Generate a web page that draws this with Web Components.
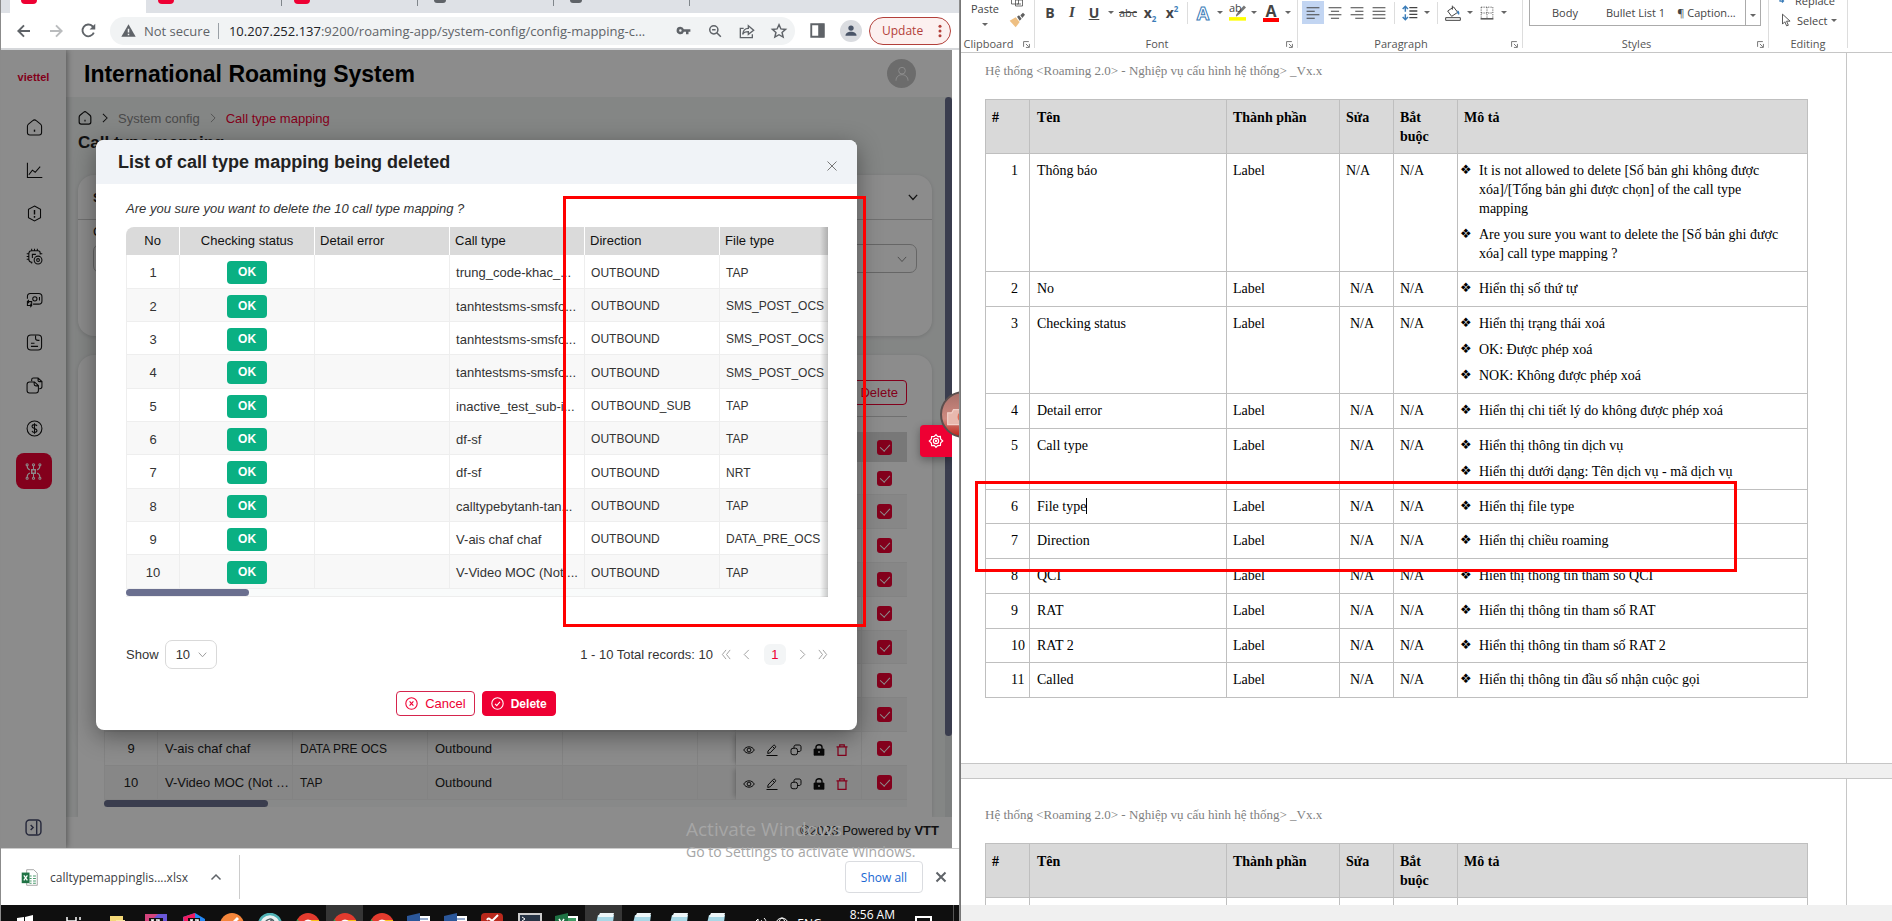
<!DOCTYPE html>
<html lang="en">
<head>
<meta charset="utf-8">
<title>International Roaming System</title>
<style>
html,body{margin:0;height:100%;overflow:hidden;background:#fff}
body{font-family:"Liberation Sans",Arial,sans-serif;font-size:13px}
</style>
</head>
<body>
<split-desk></split-desk>
<script>
const define = (name, css, html) => customElements.define(name, class extends HTMLElement {
  constructor() {
    super();
    const t = document.createElement('template');
    t.innerHTML = `<style>*{box-sizing:border-box}${css}</style>` + (typeof html === 'function' ? html(this) : html);
    this.attachShadow({ mode: 'open' }).append(t.content.cloneNode(true));
  }
});

/* ---------- icons ---------- */
const ICONS = {
  back: '<path d="M20 12H5M12 4.500l-7.500 7.500 7.500 7.500" stroke-width="2.600"/>',
  forward: '<path d="M4 12h15M12 4.500l7.500 7.500-7.500 7.500" stroke-width="2.600"/>',
  reload: '<path d="M19.500 15A8.300 8.300 0 1 1 17.700 6l2 2" stroke-width="2.600"/><path d="M21.500 2.500v8h-8z" fill="currentColor" stroke="none"/>',
  warn: '<path d="M12 2 23.500 22H.5z" fill="currentColor" stroke="none"/><path d="M12 9v6M12 17v2.500" stroke="#f1f3f4" stroke-width="2.400"/>',
  key: '<g fill="currentColor" stroke="none"><path fill-rule="evenodd" d="M7 6a6 6 0 1 0 5.600 8H16v4h4v-4h3v-4H12.600A6 6 0 0 0 7 6zm0 4a2 2 0 1 1 0 4 2 2 0 0 1 0-4z"/></g>',
  zoom: '<circle cx="10" cy="10" r="7"/><path d="m15 15 7 7M7 10h6" />',
  share: '<path d="M7 8H2v14h18v-5M14 4l8 7-8 6v-4c-4 0-7 1-8.500 4C6 12 9 8 14 8z"/>',
  star: '<path d="m12 2.500 2.900 6.400 7 .7-5.300 4.700 1.600 6.900L12 17.600l-6.200 3.600 1.600-6.900L2.100 9.600l7-.7z"/>',
  panel: '<path d="M2 2h20v20H2z" stroke-width="3"/><path d="M14 2h8v20h-8z" fill="currentColor"/>',
  person: '<g fill="currentColor" stroke="none"><circle cx="12" cy="7" r="4.600"/><path d="M2.500 20c0-9 19-9 19 0z"/></g>',
  dots: '<g fill="currentColor" stroke="none"><circle cx="12" cy="4" r="2.600"/><circle cx="12" cy="12" r="2.600"/><circle cx="12" cy="20" r="2.600"/></g>',
  home: '<path d="M2 10.500c0-1.500.5-2.500 1.500-3.300l6-4.900c1.500-1.300 3.500-1.300 5 0l6 4.900c1 .8 1.500 1.800 1.500 3.300V19c0 2-1 3.500-3.500 3.500h-13C3 22.500 2 21 2 19z"/><path d="M12 15v3" stroke-width="2"/>',
  chart: '<path d="M2 1v21h21M4 18l5-6.500 4 3 7-8"/>',
  hexa: '<path d="M12 1.500 20.500 6v12L12 22.500 3.500 18V6z"/><path d="M12 7v6.500M12 15.500V18" stroke-width="2"/>',
  chip: '<path d="M20 9V7c0-1.500-1-3-3-3H8C5.500 4 4 5.500 4 8v8c0 2.500 1.500 4 4 4h1M8 1v3M12 1v3M16 1v3M1 8h3M1 12h3M1 16h3M20 8h3M8 20v2M9 14V9h5"/><circle cx="17" cy="17" r="5.500"/><circle cx="17" cy="17" r="2"/>',
  money: '<path d="M2 11V8c0-3 1-4.500 4-4.500h12c3 0 4.500 1.500 4.500 4.500v6c0 3-1.500 4.500-4.500 4.500h-8"/><circle cx="12.500" cy="11" r="3"/><path d="M19 8.500v5M2 15h6v5.500H2zM4 12.500 2 15l2 2M6 18l2 2.500L6 23"/>',
  doc: '<rect x="2" y="1.500" width="20" height="21" rx="5"/><path d="M13.500 2v4c0 2 1.500 3 3.500 3h2M7 13h5M7 17.500h10"/>',
  docs: '<path d="M8 6V4c0-1.500 1-2.500 2.500-2.500H17l5.500 5v7c0 2-1 3-3 3h-1M17 2v3c0 1 .8 1.500 2 1.500h3"/><path d="M5 7h7l5.500 5v7c0 2-1.500 3.500-3.500 3.500H5c-2 0-3.500-1.500-3.500-3.500v-8.500C1.500 8.500 3 7 5 7zM11.500 7.500V10c0 2 1 2.500 2.500 2.500h3"/>',
  dollar: '<circle cx="12" cy="12" r="10.500"/><path d="M15.500 8.500C15 7 13.500 6.500 12 6.500c-2 0-3.500 1-3.500 2.700 0 3.600 7 2 7 5.600 0 1.700-1.500 2.700-3.500 2.700-1.700 0-3-.7-3.500-2.200M12 4.500v15"/>',
  nodes: '<rect x="9.500" y="9.500" width="5" height="5" stroke-width="2"/><circle cx="3" cy="2.500" r="1.500"/><circle cx="12" cy="2.500" r="1.500"/><circle cx="21" cy="2.500" r="1.500"/><circle cx="3" cy="21.500" r="1.500"/><circle cx="12" cy="21.500" r="1.500"/><circle cx="21" cy="21.500" r="1.500"/><path d="M12 4v4.500M12 15.500V20M3 4c0 3.500 1 5 4 6M21 4c0 3.500-1 5-4 6M3 20c0-3.500 1-5 4-6M21 20c0-3.500-1-5-4-6"/>',
  collapse: '<rect x="1.500" y="1.500" width="21" height="21" rx="5"/><path d="M16.500 2v20M8 8.500l3.500 3.500L8 15.500"/>',
  user: '<circle cx="12" cy="7" r="5"/><path d="M3 22c0-12 18-12 18 0"/>',
  right: '<path d="m7 2 10 10L7 22"/>', left: '<path d="M17 2 7 12l10 10"/>',
  down: '<path d="m2 7 10 11L22 7"/>', up: '<path d="m3 17 9-9 9 9" stroke-width="3"/>',
  first: '<path d="M11 2 3 12l8 10M20 2l-8 10 8 10"/>', last: '<path d="m4 2 8 10-8 10M13 2l8 10-8 10"/>',
  close: '<path d="m3 3 18 18M21 3 3 21"/>',
  cancel: '<circle cx="12" cy="12" r="10.500"/><path d="m8.500 8 7 8M15.500 8l-7 8"/>',
  okay: '<circle cx="12" cy="12" r="10.500"/><path d="m7.500 12.500 3.200 3.500L16.500 9"/>',
  eye: '<path d="M1.500 12C6 3.500 18 3.500 22.500 12 18 20.500 6 20.500 1.500 12z"/><circle cx="12" cy="12" r="3.800"/>',
  pencil: '<path d="M4 14 15 2.500c1.500-1.500 5.500 2 4 4L8.500 17.500 3.500 19zM13 5l4 4M1 23h22"/>',
  copy: '<rect x="2" y="8.500" width="13" height="13" rx="4"/><path d="M8 8V6c0-2.500 1-4 4-4h6c3 0 4 1.500 4 4v5c0 3-1.500 4-4 4h-3"/>',
  lock: '<path d="M2 10h20v12.500H2z" fill="currentColor"/><path d="M6 10V6c0-6 12-6 12 0v4" stroke-width="2.800"/><path d="M12 14v4" stroke="#fff" stroke-width="2.500"/>',
  trash: '<path d="M1 5.500h22M4 5.500v17h16v-17M7.500 5V1.500h9V5"/>',
  gear: '<path d="m12 1 3 3.500 4.500-.5.500 4.500L23.500 12 20 15l-.5 4.500-4.500.5-3 3-3-3.500-4.500.5-.5-4.500L.5 12 4 9l.5-4.500L9 4z"/><circle cx="12" cy="12" r="4.500"/><circle cx="12" cy="12" r="1"/>',
  excel: '<path d="M8 1h10l5 5v17H8z" fill="#fff" stroke="#999" stroke-width="1.200"/><path d="M12 10h3M17 10h4M12 13.500h3M17 13.500h4M12 17h3M17 17h4M12 20h3M17 20h4" stroke="#4a9a6d"/><path d="M1 5h11v15H1z" fill="#1f7244" stroke="none"/><path d="m4 9 5 7M9 9l-5 7" stroke="#fff" stroke-width="1.800"/>',
  brush: '<path d="m1 13 9-5 6 7-6 8z" fill="#eebf82" stroke="none"/><path d="m12 7 3-2 4 5-3 3zM17 5l4-4 3 3-4 5z" fill="#5f5f5f" stroke="none"/>',
  launch: '<path d="M2 20V2h18M10 22h12V10M10 10l10 10" stroke-width="3"/>',
  lines: '<path d="M1 3h22M1 9h14M1 15h22M1 21h14" stroke-width="2"/>',
  linec: '<path d="M1 3h22M5 9h14M1 15h22M5 21h14" stroke-width="2"/>',
  liner: '<path d="M1 3h22M9 9h14M1 15h22M9 21h14" stroke-width="2"/>',
  linej: '<path d="M1 3h22M1 9h22M1 15h22M1 21h22" stroke-width="2"/>',
  spacing: '<path d="M11 4h12M11 9h12M11 14h12M11 19h12" stroke-width="2"/><path d="M5 2v8M5 14v8M1 6l4-4 4 4M1 18l4 4 4-4" stroke="#3a7cb8" stroke-width="2.200"/>',
  bucket: '<path d="m4 9 9-6 6 8-9 6zM11 1v6"/><path d="M19 8c3 2 3 5 2 7l-3-3z" fill="#3a7cb8" stroke="none"/><path d="M1 19h22v4H1z" fill="#fff"/>',
  borders: '<path d="M2 2h20v20M2 2v20M12 2v20M2 12h20" stroke-dasharray="2 2"/><path d="M1 22h22" stroke-width="2.400"/>',
  marker: '<path d="m10 15 3-4 8-9 3 3-9 9-5 4z" fill="#777" stroke="none"/><path d="M0 18.500h24v5H0z" fill="#ff0" stroke="none"/>',
  cursor: '<path d="M6 2v17l4-4 3 7 3-1-3-7h6z" fill="#fff"/>',
  paste: '<path d="M1-8h14V8H1zM9 0h14v12H9z" fill="#fff"/><path d="M12 8h8"/>',
  replace: '<path d="M2 2v6h6M6 5l3 3-3 3" stroke="#3a7cb8" stroke-width="2.500"/>',
  camera: '<path d="M2 7h5l2-4h10v18H2z" fill="#e8b8ae" stroke="#f2cfc8"/><path d="M19 7c-5 0-6 9 0 10" stroke="#e06a55" stroke-width="2"/>'
};
define('ui-icon', ':host{display:inline-flex;flex:none}svg{display:block;overflow:visible;fill:none;stroke:currentColor}', el => {
  const s = el.getAttribute('size') || 16;
  return `<svg width="${s}" height="${s}" viewBox="0 0 24 24" stroke-width="${el.getAttribute('weight') || 1.5}" aria-hidden="true">${ICONS[el.getAttribute('name')]}</svg>`;
});

/* ---------- browser chrome ---------- */
define('tab-strip', `
:host{display:flex;height:13px;background:#dee1e6;overflow:hidden}
.tab{width:136px;display:flex;align-items:flex-start;padding:0 11px;position:relative;border-right:1px solid #dee1e6}
.tab.active{background:#fff;width:137px;margin-left:9px;padding-left:11px}
.tab:not(.active)::after{content:"";position:absolute;right:0;top:0;width:1px;height:6px;background:#80868b}
i{width:16px;height:4px;background:#ee0033;border-radius:0 0 4px 4px}
.tab.dark i{background:#5f6368;width:12px;height:3px;border-radius:0 0 8px 8px;margin-left:4px}`,
`<div class="tab active"><i></i></div><div class="tab"><i></i></div><div class="tab"><i></i></div><div class="tab dark"><i></i></div><div class="tab dark"><i></i></div>`);

define('address-bar', `
:host{display:flex;align-items:center;height:37px;padding:0 8px 0 13px;background:#fff;border-bottom:2px solid #d5d7da;color:#5f6368;font-family:"Open Sans","Noto Sans",sans-serif}
button{border:0;background:none;padding:0;color:inherit;font:inherit;display:flex;align-items:center;justify-content:center;width:32px;height:28px}
button.nav{width:20px;margin-right:12px}
.dim{color:#babcbe}
.box{flex:1;display:flex;align-items:center;height:28px;border-radius:14px;background:#f1f3f4;padding-left:11px;min-width:0}
.ns{font-size:13px;margin:0 8px 0 8px;white-space:nowrap}
.url{flex:1;min-width:0;color:#5f6368;font-size:13px;white-space:nowrap;border-left:1px solid #9aa0a6;height:16px;line-height:16px;padding-left:10px}
.url b{font-weight:400;color:#202124}
.av{width:22px;height:22px;border-radius:50%;background:#dadce0;color:#4a5568;margin:0 7px}
.upd{width:82px;border:1px solid #b3403a;border-radius:14px;background:#fcf0ef;color:#b3403a;font-size:12px;justify-content:flex-start;padding-left:12px;gap:10px}`,
`<button class="nav" aria-label="Back"><ui-icon name="back" size="18"></ui-icon></button><button class="nav dim" aria-label="Forward"><ui-icon name="forward" size="18"></ui-icon></button><button class="nav" aria-label="Reload"><ui-icon name="reload" size="17"></ui-icon></button>
<div class="box"><ui-icon name="warn" size="15"></ui-icon><span class="ns">Not secure</span><div class="url"><b>10.207.252.137</b>:9200/roaming-app/system-config/config-mapping-c...</div>
<button aria-label="Passwords"><ui-icon name="key" size="15"></ui-icon></button><button aria-label="Zoom"><ui-icon name="zoom" size="14" weight="2.600"></ui-icon></button><button aria-label="Share"><ui-icon name="share" size="16" weight="2"></ui-icon></button><button aria-label="Bookmark"><ui-icon name="star" size="16" weight="2.200"></ui-icon></button></div>
<button aria-label="Side panel" style="margin-left:6px"><ui-icon name="panel" size="15"></ui-icon></button><button class="av" aria-label="Profile"><ui-icon name="person" size="14"></ui-icon></button><button class="upd">Update<ui-icon name="dots" size="14"></ui-icon></button>`);

define('download-bar', `
:host{display:flex;align-items:center;height:57px;flex:none;background:#fff;border-top:1px solid #ccc;color:#3c4043;font-family:"Open Sans","Noto Sans",sans-serif;font-size:12px;padding:0 12px 0 20px}
.name{color:#3c4043;text-decoration:none;margin:0 20px 0 12px;width:140px}
button{border:0;background:none;padding:0;color:#5f6368;display:flex}
.item{display:flex;align-items:center;border-right:1px solid #ccc;height:44px;padding-right:17px}
.all{margin-left:auto;width:78px;height:32px;border:1px solid #dadce0;border-radius:4px;color:#1967d2;font:inherit;align-items:center;justify-content:center;margin-right:12px}`,
`<div class="item"><ui-icon name="excel" size="17"></ui-icon><a class="name" href="#">calltypemappinglis....xlsx</a><button aria-label="Options"><ui-icon name="up" size="12"></ui-icon></button></div><button class="all">Show all</button><button aria-label="Close"><ui-icon name="close" size="12" weight="4"></ui-icon></button>`);

const chrome = '<circle cx="12" cy="12" r="12" fill="#e33b2e"/><path d="M12 12h12a12 12 0 0 1-12 12z" fill="#fbc116"/><path d="M1.500 6 12 24A12 12 0 0 1 1.500 6z" fill="#2da94f"/><path d="M12 7h11v4H12z" fill="#fbc116"/><circle cx="12" cy="12" r="5.500" fill="#fff"/>';
const word = '<path d="M11 3h12v20H11z" fill="#fff"/><path d="M13 6h8M13 9h8" stroke="#2b579a"/><path d="M0 3 13 0v24L0 21z" fill="#2b579a"/>';
const note = '<path d="M6 2h16l-3 21H1z" fill="#a9d8e6"/><path d="M8 0h14l-1 4H6z" fill="#eef6f8"/>';
const TASKS = [
  [48, '<path d="m4 5 7-1v8H4zM12 4l8-2v10h-8z" fill="#fff"/>'],
  [48, '<path d="M6 4v4h9V4M19 4v3" fill="none" stroke="#fff" stroke-width="1.500"/>'],
  [40, '<path d="M5 3h13v20H5z" fill="#f5d978"/><path d="M11 7h9v14h-9z" fill="#fbe9a5"/>'],
  [38, '<path d="M1 1h22v22H1z" fill="#6a57d8"/><path d="M1 1h13L1 14z" fill="#d4447d"/><path d="M5 5h14v17H5z" fill="#111"/><path d="M7 7h3M8.500 7v8M12 7h3v8" fill="none" stroke="#fff" stroke-width="1.500"/>'],
  [38, '<path d="M1 4 13 0l10 6v17H1z" fill="#2488f5"/><path d="M1 4 13 0v8L4 20z" fill="#f21b60"/><path d="M6 5h12v18H6z" fill="#111"/><path d="M8 7h3M9.500 7v8M13 7h3v8" fill="none" stroke="#fff" stroke-width="1.500"/>'],
  [38, '<circle cx="12" cy="12" r="12" fill="#f5863b"/><path d="m9 12 8-8 2 2-7 7z" fill="#fff"/>'],
  [38, '<circle cx="12" cy="12" r="11" fill="#e9f1f1" stroke="#4fb2b5" stroke-width="2.500"/><path d="M7 12c0-7 9-8 9-2s-3 2-3-3" fill="none" stroke="#4b5b60" stroke-width="1.500"/>'],
  [37, chrome], [37, chrome, 1], [37, chrome], [37, word], [37, word],
  [37, '<rect x="0" y="0" width="22" height="22" rx="4" fill="#b9291c"/><path d="M6 7c2-4 4 2 6 0s3-3 5-5" fill="none" stroke="#fff" stroke-width="2"/>'],
  [37, '<path d="M1 1h22v22H1z" fill="#273445" stroke="#ccc" stroke-width="2"/><path d="m4 4 3 2-3 2" fill="none" stroke="#fff"/>'],
  [37, '<path d="M11 3h12v20H11z" fill="#fff"/><path d="M13 5h8v4h-8z" fill="#3d9b63"/><path d="M0 3 13 0v24L0 21z" fill="#1f7244"/><path d="m4 6 5 8M9 6l-5 8" stroke="#fff" stroke-width="1.500"/>'],
  [37, note, 1], [37, note], [37, note], [37, note]];
define('task-bar', `
:host{display:flex;height:16px;flex:none;background:#0f0f0f;color:#fff;overflow:hidden;font-family:"Open Sans","Noto Sans",sans-serif;font-size:12px}
.t{height:16px;display:flex;justify-content:center;padding-top:8px;overflow:hidden}.t.on{background:#363636}
svg{display:block;flex:none}
.tray{margin-left:auto;display:flex;align-items:flex-start;padding-right:5px}
.tray svg{margin:12px 4px 0}
.lang{line-height:16px;margin:11px 28px 0 4px;height:16px}
.clock{line-height:16px;margin-top:2px;margin-right:20px}
.tray .msg{margin:11px 0 0;padding-right:0}
.end{width:1px;height:16px;background:#555;margin-left:20px}`,
TASKS.map(([w, p, on]) => `<div class="t${on ? ' on' : ''}" style="width:${w}px"><svg width="24" height="24" viewBox="0 0 24 24">${p}</svg></div>`).join('') +
`<div class="tray"><svg width="14" height="14" viewBox="0 0 14 14" fill="none" stroke="#fff"><path d="M1 6 5 2v9M8 3c2 2 2 4 0 6M11 1c3 3 3 7 0 10"/></svg><svg width="14" height="14" viewBox="0 0 14 14" fill="none" stroke="#fff"><circle cx="7" cy="7" r="6"/><ellipse cx="7" cy="7" rx="3" ry="6"/><path d="M1 6h12"/></svg><span class="lang">ENG</span><time class="clock">8:56 AM</time><svg class="msg" width="18" height="16" viewBox="0 0 18 16" fill="none" stroke="#fff" stroke-width="2"><path d="M1 1h15v12H1z"/></svg><i class="end"></i></div>`);

/* ---------- roaming application ---------- */
define('app-sidebar', `
:host{display:flex;flex-direction:column;align-items:center;background:#fff;box-shadow:1px 0 6px #0006;z-index:1}
.logo{color:#ee0033;font-weight:bold;font-size:11px;line-height:12px;margin:21px 0 26px}
nav{display:flex;flex-direction:column;align-items:center;gap:7px}
a{display:flex;align-items:center;justify-content:center;width:36px;height:36px;border-radius:8px;color:#111;padding-left:2px}
a.on{background:#ee0033;color:#fff;padding:0}
button{border:0;background:none;padding:0;margin-top:auto;margin-bottom:12px;color:#44496b;display:flex}`,
`<div class="logo">viettel</div><nav>${['home', 'chart', 'hexa', 'chip', 'money', 'doc', 'docs', 'dollar'].map(n => `<a href="#" aria-label="${n}"><ui-icon name="${n}" size="17"></ui-icon></a>`).join('')}<a class="on" href="#" aria-label="config"><ui-icon name="nodes" size="17"></ui-icon></a></nav><button aria-label="Expand"><ui-icon name="collapse" size="17" weight="2"></ui-icon></button>`);

define('check-box', `
:host{display:flex;justify-content:center}
input{appearance:none;margin:0;width:15px;height:15px;border-radius:3px;background:#ee0033;position:relative}
input::before{content:"";position:absolute;left:5px;top:2px;width:5px;height:8px;border:solid #fff;border-width:0 1px 1px 0;transform:rotate(42deg)}`,
'<input type="checkbox" checked aria-label="Select row">');

const acts = '<div class="acts"><button aria-label="View"><ui-icon name="eye" size="12" weight="2"></ui-icon></button><button aria-label="Edit"><ui-icon name="pencil" size="12" weight="2"></ui-icon></button><button aria-label="Copy"><ui-icon name="copy" size="12" weight="2"></ui-icon></button><button aria-label="Lock"><ui-icon name="lock" size="12"></ui-icon></button><button class="red" aria-label="Remove"><ui-icon name="trash" size="12" weight="2.500"></ui-icon></button></div>';
const bgRow = (c, i) => `<tr><td class="n">${c[0] || ''}</td><td>${c[1] || ''}</td><td class="up">${c[2] || ''}</td><td>${c[3] || ''}</td><td></td><td></td><td class="fix">${c[0] ? acts : ''}</td><td class="chk"><check-box></check-box></td></tr>`;
define('mapping-table', `
:host{display:block}
table{width:100%;table-layout:fixed;border-collapse:separate;border-spacing:0;color:#222}
th{height:30px;background:#dadada;padding:0}
td{height:34px;padding:0 0 0 7px;border-right:1px solid #eee;border-bottom:1px solid #eee;white-space:nowrap}
tr:nth-child(5n+1) td{height:33px}
tr:nth-child(even) td{background:#f6f6f6}
td:first-child{border-left:1px solid #eee}
td.n{text-align:center;padding:0}.up{font-size:12px}td.chk{padding:0;border-right:0}
td.fix{padding:0 13px 0 7px;box-shadow:-5px 0 5px -3px #0003}
.acts{display:flex;justify-content:space-between;padding-top:2px}
button{border:0;background:none;padding:0;display:flex;color:#111}.red{color:#ee0033}
.bar{height:7px;background:#f7faf9}.bar i{display:block;width:164px;height:7px;border-radius:4px;background:#6a6f8f}`,
`<table><colgroup><col style="width:54px"><col style="width:135px"><col style="width:135px"><col style="width:135px"><col style="width:135px"><col><col style="width:126px"><col style="width:45px"></colgroup>
<thead><tr><th></th><th></th><th></th><th></th><th></th><th></th><th></th><th><check-box></check-box></th></tr></thead><tbody>${[[], [], [], [], [], [], [], [], [9, 'V-ais chaf chaf', 'DATA PRE OCS', 'Outbound'], [10, 'V-Video MOC (Not …', 'TAP', 'Outbound']].map(bgRow).join('')}</tbody></table><div class="bar"><i></i></div>`);

define('app-main', `
:host{display:flex;flex-direction:column;min-width:0;color:#222}
header{height:47px;background:#fff;display:flex;align-items:center;justify-content:space-between;padding:0 36px 0 18px;flex:none}
h1{font-size:23px;line-height:24px;margin:0;color:#000;white-space:nowrap}
.user{width:29px;height:29px;border-radius:50%;border:0;background:#c5c5c5;color:#fff;display:flex;align-items:center;justify-content:center;padding:0}
.body{flex:1;min-height:0;display:flex;background:#f1f4f3;overflow:hidden}
.col{flex:1;min-width:0;display:flex;flex-direction:column;padding:12px 13px 0 12px}
.crumb{display:flex;align-items:center;height:18px;gap:8px}.crumb a{color:#888;text-decoration:none;display:flex}.crumb .h{color:#111}.crumb .now{color:#ee0033}
h2{font-size:17px;line-height:20px;margin:6px 0 22px}
section{background:#fff;box-shadow:0 1px 4px #0002}
.search{height:161px;border-radius:16px;flex:none;margin-bottom:19px}
.search .top{height:45px;border-bottom:1px solid #ccc;display:flex;justify-content:space-between;align-items:center;padding:0 14px 0 15px;font-weight:bold}
.search label{display:block;padding:5px 15px;line-height:14px}
.sel{margin:0 15px;height:29px;border:1px solid #bbb;border-radius:7px;display:flex;align-items:center;justify-content:flex-end;padding-right:9px;color:#777}
.list{flex:1;border-radius:16px 16px 0 0;padding:25px 25px 0 26px}
.del{display:flex;align-items:center;justify-content:flex-end;width:80px;height:25px;margin:0 0 11px auto;border:1px solid #ee0033;border-radius:4px;background:#fff;color:#ee0033;font:inherit;padding:0 8px}
.rule{border-top:1px solid #ccc;margin-bottom:15px}
.scroll{width:7px;background:#e4e7e8}.scroll i{display:block;height:639px;border-radius:4px;background:#6a6f8f}
footer{height:31px;background:#fff;text-align:right;line-height:28px;padding-right:13px;flex:none}`,
`<header><h1>International Roaming System</h1><button class="user" aria-label="Account"><ui-icon name="user" size="16"></ui-icon></button></header>
<div class="body"><div class="col"><nav class="crumb"><a class="h" href="#" aria-label="Home"><ui-icon name="home" size="14" weight="2"></ui-icon></a><ui-icon name="right" size="10" weight="2.500"></ui-icon><a href="#">System config</a><ui-icon name="right" size="10" weight="2" style="color:#888"></ui-icon><a class="now" href="#">Call type mapping</a></nav><h2>Call type mapping</h2>
<section class="search"><div class="top"><span>Search</span><ui-icon name="down" size="10" weight="3"></ui-icon></div><label>Call type</label><div class="sel"><ui-icon name="down" size="10" weight="2"></ui-icon></div></section>
<section class="list"><button class="del">Delete</button><div class="rule"></div><mapping-table></mapping-table></section></div><div class="scroll"><i></i></div></div>
<footer>©2023 Powered by <b>VTT</b></footer>`);

const ROWS = [['trung_code-khac_...', 'OUTBOUND', 'TAP'], ['tanhtestsms-smsfo...', 'OUTBOUND', 'SMS_POST_OCS'], ['tanhtestsms-smsfo...', 'OUTBOUND', 'SMS_POST_OCS'], ['tanhtestsms-smsfo...', 'OUTBOUND', 'SMS_POST_OCS'], ['inactive_test_sub-i...', 'OUTBOUND_SUB', 'TAP'], ['df-sf', 'OUTBOUND', 'TAP'], ['df-sf', 'OUTBOUND', 'NRT'], ['calltypebytanh-tan...', 'OUTBOUND', 'TAP'], ['V-ais chaf chaf', 'OUTBOUND', 'DATA_PRE_OCS'], ['V-Video MOC (Not ...', 'OUTBOUND', 'TAP']];
define('delete-dialog', `
:host{display:block;width:80%;background:#fff;border-radius:8px;box-shadow:0 6px 24px #0006;overflow:hidden;color:#333;height:590px}
header{height:44px;background:#f0f3f7;display:flex;align-items:center;justify-content:space-between;padding:0 19px 0 22px}
h2{font-size:18px;line-height:20px;margin:0;color:#222;white-space:nowrap}
button{font:inherit;display:flex;align-items:center}
.x{border:0;background:none;padding:8px 0 0;color:#777}
.body{padding:16px 29px 0 30px}
p{font-style:italic;line-height:18px;margin:0 0 9px;white-space:nowrap}
.wrap{position:relative;overflow:hidden;border-radius:8px 0 0 0}
.wrap::after{content:"";position:absolute;inset:0 0 0 auto;width:8px;background:linear-gradient(90deg,#0000,#0003)}
table{width:729px;table-layout:fixed;border-collapse:separate;border-spacing:0}
th{height:28px;background:#dadada;color:#111;font-weight:400;text-align:left;padding:0 5px 2px;border-right:1px solid #fff}
td{height:33px;padding:2px 0 0 6px;border-right:1px solid #eee;border-bottom:1px solid #eee;white-space:nowrap;overflow:hidden}
td:first-child{border-left:1px solid #eee}
tr:nth-child(3n+1) td{height:34px}
tr:nth-child(even) td{background:#f8f8f8}
th.c{text-align:center;padding:0 0 2px}td.c{text-align:center;padding:2px 0 0}.up{font-size:12px}
.ok{display:inline-block;width:40px;height:23px;line-height:23px;border-radius:4px;background:#0ab083;color:#fff;font-weight:bold;font-size:12px}
.bar{height:8px;background:#f9fbfb;border-bottom:1px solid #eee}.bar i{display:block;width:123px;height:7px;border-radius:4px;background:#6a6f8f}
.pager{display:flex;align-items:center;margin-top:43px;height:29px}
.sel{position:relative;margin-left:6px;color:#999}
select{appearance:none;width:52px;height:29px;border:1px solid #d9d9d9;border-radius:7px;background:#fff;font:inherit;color:#333;padding:0 0 0 10px;display:block}
.sel ui-icon{position:absolute;right:10px;top:10px;pointer-events:none}
.tot{margin-left:auto;margin-right:8px}
.pager button{border:0;background:none;padding:0;color:#999;width:11px;height:21px;justify-content:center;margin-right:9px}
.pager .cur{width:22px;background:#f3f5f6;border-radius:6px;color:#ee0033;margin:0 11px 0 3px}
.pager button:last-child{margin-right:0}
.foot{display:flex;justify-content:center;gap:7px;margin-top:22px;padding-right:2px}
.foot button{height:25px;border:1px solid #d5244d;border-radius:4px;background:#fff;color:#ee0033;gap:7px;padding:0 8px;white-space:nowrap}
.foot .go{background:#ee0033;color:#fff;border-color:#ee0033;font-weight:bold;font-size:12px}`,
`<header><h2>List of call type mapping being deleted</h2><button class="x" aria-label="Close"><ui-icon name="close" size="12" weight="2"></ui-icon></button></header>
<div class="body"><p>Are you sure you want to delete the 10 call type mapping ?</p><div class="wrap"><table><colgroup><col style="width:54px"><col><col><col><col><col></colgroup>
<thead><tr><th class="c">No</th><th class="c">Checking status</th><th>Detail error</th><th>Call type</th><th>Direction</th><th>File type</th></tr></thead>
<tbody>${ROWS.map((r, i) => `<tr><td class="c">${i + 1}</td><td class="c"><span class="ok">OK</span></td><td></td><td>${r[0]}</td><td class="up">${r[1]}</td><td class="up">${r[2]}</td></tr>`).join('')}</tbody></table><div class="bar"><i></i></div></div>
<div class="pager"><label for="size">Show</label><div class="sel"><select id="size"><option>10</option></select><ui-icon name="down" size="9" weight="2.500"></ui-icon></div><span class="tot">1 - 10 Total records: 10</span>
<button aria-label="First"><ui-icon name="first" size="11" weight="2"></ui-icon></button><button aria-label="Previous"><ui-icon name="left" size="11" weight="2"></ui-icon></button><button class="cur">1</button><button aria-label="Next"><ui-icon name="right" size="11" weight="2"></ui-icon></button><button aria-label="Last"><ui-icon name="last" size="11" weight="2"></ui-icon></button></div>
<div class="foot"><button><ui-icon name="cancel" size="13" weight="2"></ui-icon>Cancel</button><button class="go"><ui-icon name="okay" size="13" weight="2"></ui-icon>Delete</button></div></div>`);

define('roaming-app', `
:host{position:relative;flex:1;min-height:0;margin-right:7px;display:grid;grid-template-columns:65px 1fr;overflow:hidden}
.mask{position:absolute;inset:0;z-index:2;background:#00000073;display:flex;justify-content:center;align-items:flex-start;padding-top:90px}
.set{position:absolute;z-index:3;right:0;top:375px;width:32px;height:32px;border:0;border-radius:4px 0 0 4px;background:#ee0033;color:#fff;display:flex;align-items:center;justify-content:center;padding:0;box-shadow:0 3px 8px #0005}`,
`<app-sidebar></app-sidebar><app-main></app-main><div class="mask"><delete-dialog></delete-dialog></div><button class="set" aria-label="Settings"><ui-icon name="gear" size="14" weight="2"></ui-icon></button>`);

define('browser-window', `
:host{position:relative;display:flex;flex-direction:column;min-width:0;height:100vh;border:solid #8b8b8b;border-width:0 1px;background:#fff;overflow:hidden}
.cam{position:absolute;left:939px;top:391px;width:47px;height:47px;border-radius:50%;background:linear-gradient(#a8706a,#cf8a80 60%,#c0261c);border:2px solid #5b4f4e;z-index:4;padding:14px 0 0 4px}
.wm{position:absolute;left:685px;top:815px;z-index:5;color:#a6a6a6;font-family:"Open Sans","Noto Sans",sans-serif;font-size:19px;line-height:28px;white-space:nowrap}
.wm small{display:block;font-size:14px;line-height:18px}`,
`<tab-strip></tab-strip><address-bar></address-bar><roaming-app></roaming-app><download-bar></download-bar><task-bar></task-bar><div class="cam"><ui-icon name="camera" size="20"></ui-icon></div><div class="wm">Activate Windows<small>Go to Settings to activate Windows.</small></div>`);

/* ---------- word processor ---------- */
define('ribbon-group', `
:host{display:flex;flex-direction:column;position:relative;height:48px;border-right:1px solid #ddd;flex:none}
.tools{height:34px;display:flex;overflow:hidden;flex:none}
.lab{display:flex;flex:none;justify-content:center;align-items:center;line-height:12px;height:20px;color:#555;padding-right:18px}
:host([plain]) .lab{padding:0}
ui-icon{position:absolute;right:4px;top:41px;color:#666}`,
el => `<div class="tools"><slot></slot></div><div class="lab">${el.getAttribute('label')}</div>${el.hasAttribute('plain') ? '' : '<ui-icon name="launch" size="7"></ui-icon>'}`);

define('word-ribbon', `
:host{display:flex;height:53px;border-bottom:1px solid #c6c6c6;background:#fff;color:#444;font-family:"Open Sans","Noto Sans",sans-serif;font-size:11px;flex:none}
button{border:0;background:none;padding:0;font:inherit;color:inherit;width:22px;height:23px;display:flex;align-items:center;justify-content:center;flex:none;white-space:nowrap}
.row{display:flex;align-items:center;height:23px;margin-top:1px;padding-left:4px}
.v{width:1px;height:22px;background:#ddd;margin:0 4px}
.c{width:12px}.c::before{content:"";border:solid transparent;border-width:3px 3px 0;border-top-color:#666}
.big{font-size:14px;font-weight:bold}.big i{font-family:"Liberation Serif",serif;font-size:15px}
sub,sup{font-size:8px;color:#3a7cb8;line-height:0}
.on{background:#c2d5f2}
.pa{flex-direction:column;width:48px;height:30px;justify-content:flex-start;line-height:18px}
.col{display:flex;flex-direction:column;align-items:center}
.styles{display:flex;margin-left:6px;width:232px;height:26px;border:solid #ababab;border-width:0 1px 1px}
.styles button{width:auto;height:25px;margin-right:16px}
.styles .more{width:15px;border-left:1px solid #ababab;margin:0 0 0 auto;border-top:0;padding-top:6px}
.ed{display:flex;flex-direction:column;padding-left:10px}.ed button{width:auto;justify-content:flex-start;gap:4px;height:22px}.ed button:first-child{height:9px;align-items:flex-end;line-height:16px}
.A{font-size:18px;line-height:20px;font-weight:bold;color:#fff;-webkit-text-stroke:1px #3a7cb8}
.F{font-size:16px;line-height:14px;font-weight:bold;flex-direction:column}.F::after{content:"";width:16px;height:4px;background:#f00}
.hl{position:relative}.hl span{position:absolute;left:3px;top:0;line-height:14px}`,
`<ribbon-group label="Clipboard" style="width:74px"><button class="pa">Paste<span class="c" style="height:14px;display:flex;align-items:center;justify-content:center"></span></button><div class="col"><ui-icon name="paste" size="12"></ui-icon><ui-icon name="brush" size="16"></ui-icon></div></ribbon-group>
<ribbon-group label="Font" style="width:263px"><div class="row"><button class="big">B</button><button class="big"><i>I</i></button><button class="big"><u>U</u></button><button class="c"></button><button><s>abc</s></button><button class="big"><span>x<sub>2</sub></span></button><button class="big"><span>x<sup>2</sup></span></button><i class="v"></i><button class="A">A</button><button class="c"></button><button class="hl"><span>ab</span><ui-icon name="marker" size="17"></ui-icon></button><button class="c"></button><button class="F">A</button><button class="c"></button></div></ribbon-group>
<ribbon-group label="Paragraph" style="width:225px"><div class="row"><button class="on"><ui-icon name="lines" size="14"></ui-icon></button><button><ui-icon name="linec" size="14"></ui-icon></button><button><ui-icon name="liner" size="14"></ui-icon></button><button><ui-icon name="linej" size="14"></ui-icon></button><i class="v"></i><button><ui-icon name="spacing" size="16"></ui-icon></button><button class="c"></button><i class="v"></i><button><ui-icon name="bucket" size="16"></ui-icon></button><button class="c"></button><button><ui-icon name="borders" size="14"></ui-icon></button><button class="c"></button></div></ribbon-group>
<ribbon-group label="Styles" style="width:246px"><div class="styles"><button style="margin-left:22px;margin-right:28px">Body</button><button style="margin-right:12px">Bullet List 1</button><button style="margin:0">¶ Caption...</button><button class="more c"></button></div></ribbon-group>
<ribbon-group label="Editing" plain style="width:79px"><div class="ed"><button><ui-icon name="replace" size="12"></ui-icon>Replace</button><button><ui-icon name="cursor" size="14"></ui-icon>Select<span class="c" style="width:6px;display:flex"></span></button></div></ribbon-group>`);

const HEAD = '<thead><tr><th>#</th><th>Tên</th><th>Thành phần</th><th>Sửa</th><th>Bắt buộc</th><th>Mô tả</th></tr></thead>';
const SPEC = [
  ['Thông báo', 'It is not allowed to delete [Số bản ghi không được xóa]/[Tổng bản ghi được chọn] of the call type mapping', 'Are you sure you want to delete the [Số bản ghi được xóa] call type mapping ?'],
  ['No', 'Hiển thị số thứ tự'], ['Checking status', 'Hiển thị trạng thái xoá', 'OK: Được phép xoá', 'NOK: Không được phép xoá'],
  ['Detail error', 'Hiển thị chi tiết lý do không được phép xoá'], ['Call type', 'Hiển thị thông tin dịch vụ', 'Hiển thị dưới dạng: Tên dịch vụ - mã dịch vụ'],
  ['File type<i></i>', 'Hiển thị file type'], ['Direction', 'Hiển thị chiều roaming'], ['QCI', 'Hiển thị thông tin tham số QCI'],
  ['RAT', 'Hiển thị thông tin tham số RAT'], ['RAT 2', 'Hiển thị thông tin tham số RAT 2'], ['Called', 'Hiển thị thông tin đầu số nhận cuộc gọi']];
define('spec-table', `
:host{display:block;margin-left:24px;margin-right:38px}
table{width:100%;table-layout:fixed;border-collapse:collapse;line-height:19px;color:#000}
th,td{border:1px solid #bfbfbf;padding:8px 6px 7px;vertical-align:top;text-align:left}
td{padding-top:7px}
th{background:#d9d9d9}
th:nth-child(2),td:nth-child(2){padding-left:7px}
td:first-child{padding-left:25px;padding-right:0}
td:nth-child(4){padding-left:10px}tr:first-child td:nth-child(4){padding-left:6px}
td:last-child{padding-left:2px;padding-bottom:1px}
ul{list-style:none;margin:0;padding:0}li{padding:0 14px 0 19px;margin-bottom:7px;position:relative}
li::before{content:"❖";position:absolute;left:0;font:13px/18px "DejaVu Sans",sans-serif}
tr:nth-child(6) td,tr:nth-child(10) td{padding-bottom:0}
i{display:inline-block;width:1px;height:16px;background:#000;vertical-align:-3px}
.blank td{height:40px}`,
el => `<table><colgroup><col style="width:44px"><col style="width:197px"><col style="width:113px"><col style="width:54px"><col style="width:64px"><col></colgroup>${HEAD}<tbody>${el.hasAttribute('continued') ? '<tr class="blank"><td></td><td></td><td></td><td></td><td></td><td></td></tr>' :
  SPEC.map(([n, ...d], i) => `<tr><td>${i + 1}</td><td>${n}</td><td>Label</td><td>N/A</td><td>N/A</td><td><ul>${d.map(x => `<li>${x}</li>`).join('')}</ul></td></tr>`).join('')}</tbody></table>`);

define('doc-page', `
:host{display:block;background:#fff;overflow:hidden;flex:none}
.sheet{margin-right:45px;border-right:1px solid #c6c6c6}
p{margin:0;padding:8px 0 18px 24px;font-size:13px;line-height:20px;color:#7f7f7f}
:host(.next) p{padding-top:26px}`,
'<div class="sheet"><p>Hệ thống &lt;Roaming 2.0&gt; - Nghiệp vụ cấu hình hệ thống&gt; _Vx.x</p><slot></slot></div>');

define('word-window', `
:host{display:flex;flex-direction:column;min-width:0;height:100vh;border-left:1px solid #777;background:#fff;overflow:hidden;font-family:"Liberation Serif","Times New Roman",serif;font-size:14px}
.first{display:block;padding-bottom:65px}
.gap{height:16px;flex:none;background:#f0f0f0;border:solid #c6c6c6;border-width:1px 0}
.view{flex:1;min-height:0;overflow:hidden;display:flex;flex-direction:column}
.status{height:16px;background:#f0f0f0;flex:none}`,
`<word-ribbon></word-ribbon><div class="view"><doc-page><spec-table class="first"></spec-table></doc-page><div class="gap"></div><doc-page class="next"><spec-table continued></spec-table></doc-page></div><div class="status"></div>`);

define('red-marker', ':host{position:absolute;border:3px solid #f00;z-index:10;pointer-events:none}', '');
define('split-desk', `
:host{position:relative;display:grid;grid-template-columns:960fr 932fr;height:100vh;overflow:hidden}
.a{left:563px;top:196px;width:303px;height:431px}.b{left:975px;top:481px;width:762px;height:91px}`,
`<browser-window></browser-window><word-window></word-window><red-marker class="a"></red-marker><red-marker class="b"></red-marker>`);
</script>
</body>
</html>
